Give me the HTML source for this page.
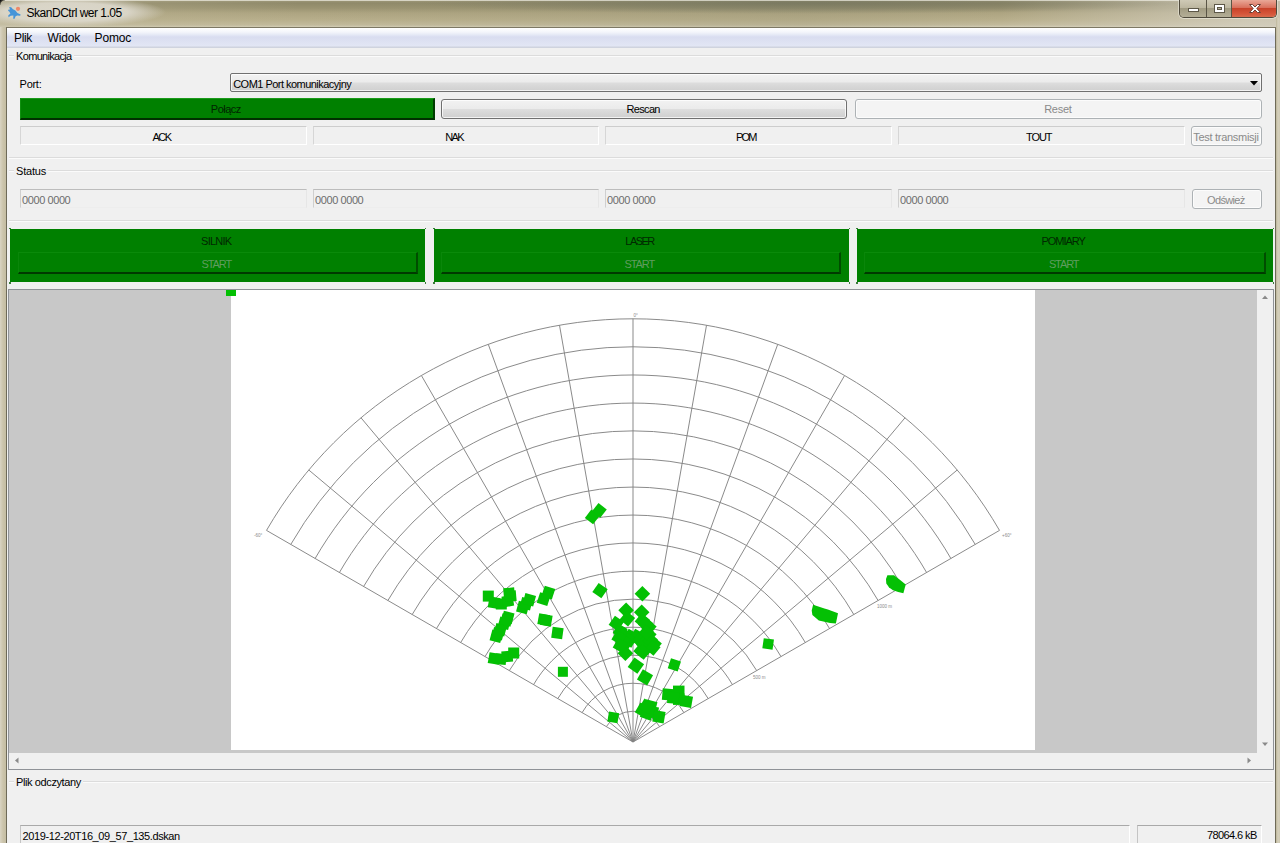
<!DOCTYPE html>
<html lang="pl">
<head>
<meta charset="utf-8">
<title>SkanDCtrl wer 1.05</title>
<style>
html,body{margin:0;padding:0;}
body{width:1280px;height:843px;overflow:hidden;position:relative;background:#c9c2a8;
  font-family:"Liberation Sans",sans-serif;font-size:11px;color:#000;}
.abs,.abs *{position:absolute;box-sizing:border-box;}
div,span{position:absolute;box-sizing:border-box;white-space:nowrap;}
/* window chrome */
#title{left:0;top:0;width:1280px;height:28px;
  background:
   radial-gradient(ellipse 100px 15px at 66px 12px, rgba(219,215,202,1) 0%, rgba(219,215,202,.95) 62%, rgba(219,215,202,0) 100%),
   radial-gradient(ellipse 380px 11px at 800px 3px, rgba(108,110,90,.6) 0%, rgba(108,110,90,.35) 50%, rgba(108,110,90,0) 100%),
   linear-gradient(to right, rgba(200,194,170,.55) 0px, rgba(190,183,152,.2) 160px, rgba(170,162,128,0) 300px, rgba(150,146,116,.22) 800px, rgba(170,162,128,0) 1000px, rgba(214,209,195,.75) 1250px),
   linear-gradient(to bottom, #a19b7c 0px, #8f8969 3px, #9a9371 8px, #ada481 13px, #b8af8c 20px, #c2ba9c 25px, #cfc9b0 26.5px);}
#title .hl{left:0;top:0;width:1280px;height:1px;background:rgba(240,238,228,.7);}
#lframe{left:0;top:27px;width:6px;height:816px;background:linear-gradient(to right,#d9d4c3 0,#cbc4ab 3px,#c4bda3 6px);}
#rframe{left:1276px;top:18px;width:4px;height:825px;background:linear-gradient(to right,#bdb699 0,#d5d0bd 2px,#cfc9b3 4px);}
#client{left:6px;top:27px;width:1270px;height:816px;background:#f0f0f0;border-left:1px solid #6e6a58;border-top:1px solid #7d7864;border-right:1px solid #6e6a58;}
#tl{left:0;top:0;width:5px;height:5px;background:radial-gradient(circle at 5px 5px, rgba(0,0,0,0) 0, rgba(0,0,0,0) 4.2px, #4a473c 5px, #111 6.2px);}
#ttext{left:27px;top:5px;font-size:12px;line-height:15px;color:#000;}
/* window buttons */
#wb{left:1179px;top:0;width:98px;height:18px;border:1px solid #4f4a3c;border-top:none;border-radius:0 0 5px 5px;overflow:hidden;
  box-shadow:0 0 0 1px rgba(240,238,228,.55);}
#wb .b1{left:0;top:0;width:27px;height:17px;background:linear-gradient(to bottom,#cfcab6 0,#bdb7a0 45%,#a19b82 50%,#b4ae96 100%);border-right:1px solid #5a5546;}
#wb .b2{left:27px;top:0;width:25px;height:17px;background:linear-gradient(to bottom,#cfcab6 0,#bdb7a0 45%,#a19b82 50%,#b4ae96 100%);border-right:1px solid #5a5546;}
#wb .b3{left:52px;top:0;width:44px;height:17px;background:linear-gradient(to bottom,#e9a897 0,#d9705c 45%,#c8432a 50%,#d5553a 80%,#d86a4c 100%);}
/* menubar */
#menubar{left:7px;top:28px;width:1268px;height:20px;
  background:linear-gradient(to bottom,#ffffff 0,#f4f6fb 4px,#e4e8f5 7px,#d9ddf0 9px,#dde1f2 13px,#e2e6f4 18px,#cfd3de 19px,#cfd3de 20px);}
#menubar span{top:3px;font-size:12px;line-height:15px;color:#000;}
/* generic widgets */
.gline{height:1px;background:#dcdcdc;box-shadow:0 1px 0 #fbfbfb;}
.gtitle{font-size:11px;line-height:13px;background:#f0f0f0;}
.sunk{border:1px solid;border-color:#cdcdcd #ffffff #ffffff #d6d6d6;background:#f0f0f0;text-align:center;font-size:11px;line-height:16px;}
.btn{border:1px solid #707070;border-radius:3px;text-align:center;font-size:11px;line-height:18px;
  background:linear-gradient(to bottom,#f2f2f2 0,#ebebeb 48%,#dddddd 52%,#cfcfcf 100%);box-shadow:inset 0 0 0 1px rgba(255,255,255,.75);}
.btn.dis{border-color:#adb2b5;background:#f4f4f4;color:#838383;box-shadow:inset 0 0 0 1px #fcfcfc;}
.edit{border:1px solid;border-color:#bdbdbd #e6e6e6 #ededed #cfcfcf;background:#f0f0f0;color:#6d6d6d;font-size:11px;line-height:16px;padding-left:2px;}
.gpanel{background:#008000;}
.gpanel .lab{left:0;width:100%;text-align:center;font-size:11px;line-height:13px;color:#002a00;}
.gpanel .gb{border:1px solid;border-color:#0a8a0a #004d00 #003a00 #0a860a;border-bottom-width:2px;border-right-width:2px;background:#008000;color:#5f9d5f;text-align:center;font-size:11px;line-height:19px;}
.dot{width:1.5px;height:1.5px;background:#3a7a3a;}
</style>
</head>
<body>
<div id="title"><div class="hl"></div></div>
<div id="lframe"></div>
<div id="rframe"></div>
<div id="tl"></div>
<svg style="position:absolute;left:7px;top:5px" width="16" height="16" viewBox="0 0 16 16">
  <path d="M2.2 2.2 C3.5 1.6 5 2.6 5.6 4 L8.4 5.4 L10.4 8 L13.6 9.4 L13.2 10.8 L10.2 10.6 L8.6 11.2 L7.6 13.8 L6.2 13.8 L6.4 10.6 L3.6 10.8 L1.6 12.2 L1.2 10.6 L3.4 8.6 L2.2 6.4 L1 5.8 L1.6 4.4 L3 4.6 Z" fill="#3b8fd9" opacity=".92"/>
  <circle cx="11" cy="3.8" r="2.1" fill="#ef7f5e" opacity=".9"/>
</svg>
<div id="wb">
  <div class="b1"></div><div class="b2"></div><div class="b3"></div>
  <svg style="position:absolute;left:0;top:0" width="96" height="17" viewBox="0 0 96 17">
    <rect x="8.5" y="8.5" width="10" height="3" fill="#fff" stroke="#5d5848" stroke-width="1"/>
    <rect x="34.5" y="4.5" width="10" height="8" fill="#fff" stroke="#5d5848" stroke-width="1"/>
    <rect x="37.5" y="7.5" width="4" height="2" fill="#b7b19a" stroke="#5d5848" stroke-width="1"/>
    <path d="M69.5 4.5 L72.5 4.5 L75 7 L77.5 4.5 L80.5 4.5 L76.8 8.5 L80.5 12.5 L77.5 12.5 L75 10 L72.5 12.5 L69.5 12.5 L73.2 8.5 Z" fill="#fff" stroke="#6b4036" stroke-width="1"/>
  </svg>
</div>
<div id="client"></div>
<div id="menubar"></div>

<!-- Komunikacja group -->
<div class="gline" style="left:9px;top:55px;width:1264px"></div>
<div class="gline" style="left:9px;top:157px;width:1264px"></div>
<div class="gtitle" style="left:14px;top:49px;width:60px;height:13px"></div>
<div class="btn" id="combo" style="left:230px;top:73px;width:1032px;height:19px;text-align:left;padding-left:3px;line-height:17px;border-radius:2px">
  <svg style="position:absolute;right:3px;top:7px" width="8" height="5" viewBox="0 0 8 5"><path d="M0 0 L8 0 L4 4.5 Z" fill="#000"/></svg></div>
<div id="polacz" style="left:20px;top:98px;width:415px;height:22px;background:#008000;border:1px solid;border-color:#1a9a1a #003c00 #003000 #109010;border-bottom-width:2px;border-right-width:2px;text-align:center;font-size:11px;line-height:20px;color:#002400"></div>
<div class="btn" style="left:441px;top:99px;width:406px;height:20px"></div>
<div class="btn dis" style="left:855px;top:99px;width:407px;height:20px"></div>
<div class="sunk" style="left:20px;top:126px;width:287px;height:19px"></div>
<div class="sunk" style="left:313px;top:126px;width:286px;height:19px"></div>
<div class="sunk" style="left:605px;top:126px;width:287px;height:19px"></div>
<div class="sunk" style="left:898px;top:126px;width:287px;height:19px"></div>
<div class="btn dis" style="left:1191px;top:126px;width:71px;height:20px;line-height:18px"></div>

<!-- Status group -->
<div class="gline" style="left:9px;top:170px;width:1264px"></div>
<div class="gline" style="left:9px;top:220px;width:1264px"></div>
<div class="gtitle" style="left:14px;top:164px;width:34px;height:13px"></div>
<div class="edit" style="left:20px;top:189px;width:287px;height:19px"></div>
<div class="edit" style="left:313px;top:189px;width:286px;height:19px"></div>
<div class="edit" style="left:605px;top:189px;width:287px;height:19px"></div>
<div class="edit" style="left:898px;top:189px;width:287px;height:19px"></div>
<div class="btn dis" style="left:1192px;top:189px;width:70px;height:20px;line-height:18px"></div>

<!-- green panels -->
<div class="gpanel" style="left:10px;top:229px;width:415px;height:53px"><div class="gb" style="left:8px;top:23px;width:400px;height:22px"></div></div>
<div class="gpanel" style="left:434px;top:229px;width:415px;height:53px"><div class="gb" style="left:7px;top:23px;width:400px;height:22px"></div></div>
<div class="gpanel" style="left:857px;top:229px;width:416px;height:53px"><div class="gb" style="left:7px;top:23px;width:402px;height:22px"></div></div>

<div class="dot" style="left:9px;top:227.5px"></div>
<div class="dot" style="left:424.5px;top:227.5px"></div>
<div class="dot" style="left:9px;top:282px"></div>
<div class="dot" style="left:424.5px;top:282px"></div>
<div class="dot" style="left:433px;top:227.5px"></div>
<div class="dot" style="left:848.5px;top:227.5px"></div>
<div class="dot" style="left:433px;top:282px"></div>
<div class="dot" style="left:848.5px;top:282px"></div>
<div class="dot" style="left:856px;top:227.5px"></div>
<div class="dot" style="left:1272.5px;top:227.5px"></div>
<div class="dot" style="left:856px;top:282px"></div>
<div class="dot" style="left:1272.5px;top:282px"></div>
<!-- scroll area -->
<div id="scroll" style="left:8px;top:289px;width:1266px;height:481px;border:1px solid #8f9297;background:#f0f0f0"></div>
<div style="left:9px;top:290px;width:1248px;height:463px;background:#c8c8c8"></div>
<div style="left:231px;top:290px;width:804px;height:460px;background:#fff"></div>
<div style="left:226px;top:289.5px;width:10px;height:6px;background:#04c004"></div>
<svg style="position:absolute;left:0;top:0" width="1280" height="843" viewBox="0 0 1280 843">
<g fill="none" stroke="#848484" stroke-width="0.95">
<path d="M606.4 726.6 A30.7 30.7 0 0 1 659.6 726.6"/>
<path d="M582.1 712.6 A58.8 58.8 0 0 1 683.9 712.6"/>
<path d="M557.8 698.6 A86.8 86.8 0 0 1 708.2 698.6"/>
<path d="M533.6 684.6 A114.8 114.8 0 0 1 732.4 684.6"/>
<path d="M509.3 670.6 A142.8 142.8 0 0 1 756.7 670.6"/>
<path d="M485.0 656.6 A170.9 170.9 0 0 1 781.0 656.6"/>
<path d="M460.7 642.5 A198.9 198.9 0 0 1 805.3 642.5"/>
<path d="M436.5 628.5 A226.9 226.9 0 0 1 829.5 628.5"/>
<path d="M412.2 614.5 A255.0 255.0 0 0 1 853.8 614.5"/>
<path d="M387.9 600.5 A283.0 283.0 0 0 1 878.1 600.5"/>
<path d="M363.6 586.5 A311.0 311.0 0 0 1 902.4 586.5"/>
<path d="M339.4 572.5 A339.1 339.1 0 0 1 926.6 572.5"/>
<path d="M315.1 558.5 A367.1 367.1 0 0 1 950.9 558.5"/>
<path d="M290.8 544.4 A395.1 395.1 0 0 1 975.2 544.4"/>
<path d="M266.5 530.4 A423.2 423.2 0 0 1 999.5 530.4"/>
<path d="M633.0 742.0 L266.5 530.4"/>
<path d="M633.0 742.0 L308.8 470.0"/>
<path d="M633.0 742.0 L361.0 417.8"/>
<path d="M633.0 742.0 L421.4 375.5"/>
<path d="M633.0 742.0 L488.3 344.4"/>
<path d="M633.0 742.0 L559.5 325.3"/>
<path d="M633.0 742.0 L633.0 318.8"/>
<path d="M633.0 742.0 L706.5 325.3"/>
<path d="M633.0 742.0 L777.7 344.4"/>
<path d="M633.0 742.0 L844.6 375.5"/>
<path d="M633.0 742.0 L905.0 417.8"/>
<path d="M633.0 742.0 L957.2 470.0"/>
<path d="M633.0 742.0 L999.5 530.4"/>
</g>
<g font-family="Liberation Sans, sans-serif" font-size="4.5" fill="#8c8c8c">
<text x="633.5" y="317">0°</text>
<text x="254" y="537">-60°</text>
<text x="1002" y="537">+60°</text>
<text x="753" y="679">500 m</text>
<text x="877" y="608">1000 m</text>
</g>
<g fill="#04c004">
<rect x="482.8" y="590.6" width="11.0" height="11.0" transform="rotate(0 488.3 596.1)"/>
<rect x="488.6" y="597.2" width="11.0" height="11.0" transform="rotate(10 494.1 602.7)"/>
<rect x="495.8" y="598.5" width="11.0" height="11.0" transform="rotate(0 501.3 604.0)"/>
<rect x="502.3" y="595.6" width="11.0" height="11.0" transform="rotate(-10 507.8 601.1)"/>
<rect x="505.2" y="590.6" width="11.0" height="11.0" transform="rotate(-5 510.7 596.1)"/>
<rect x="503.6" y="587.8" width="11.0" height="11.0" transform="rotate(-5 509.1 593.3)"/>
<rect x="517.3" y="602.1" width="11.0" height="11.0" transform="rotate(15 522.8 607.6)"/>
<rect x="520.6" y="598.2" width="11.0" height="11.0" transform="rotate(15 526.1 603.7)"/>
<rect x="523.8" y="594.3" width="11.0" height="11.0" transform="rotate(15 529.3 599.8)"/>
<rect x="538.2" y="593.6" width="11.0" height="11.0" transform="rotate(18 543.7 599.1)"/>
<rect x="542.8" y="587.1" width="11.0" height="11.0" transform="rotate(18 548.3 592.6)"/>
<rect x="538.2" y="614.1" width="11.0" height="11.0" transform="rotate(10 543.7 619.6)"/>
<rect x="540.8" y="614.8" width="11.0" height="11.0" transform="rotate(10 546.3 620.3)"/>
<rect x="551.9" y="627.5" width="11.0" height="11.0" transform="rotate(8 557.4 633.0)"/>
<rect x="502.3" y="611.9" width="11.0" height="11.0" transform="rotate(15 507.8 617.4)"/>
<rect x="498.7" y="617.8" width="11.0" height="11.0" transform="rotate(15 504.2 623.3)"/>
<rect x="494.8" y="624.3" width="11.0" height="11.0" transform="rotate(15 500.3 629.8)"/>
<rect x="490.8" y="630.8" width="11.0" height="11.0" transform="rotate(15 496.3 636.3)"/>
<rect x="501.0" y="614.5" width="11.0" height="11.0" transform="rotate(15 506.5 620.0)"/>
<rect x="492.5" y="628.2" width="11.0" height="11.0" transform="rotate(15 498.0 633.7)"/>
<rect x="488.6" y="653.0" width="11.0" height="11.0" transform="rotate(10 494.1 658.5)"/>
<rect x="495.2" y="653.6" width="11.0" height="11.0" transform="rotate(5 500.7 659.1)"/>
<rect x="501.7" y="651.0" width="11.0" height="11.0" transform="rotate(-5 507.2 656.5)"/>
<rect x="508.2" y="647.5" width="11.0" height="11.0" transform="rotate(0 513.7 653.0)"/>
<rect x="557.9" y="666.8" width="10" height="10" transform="rotate(0 562.9 671.8)"/>
<rect x="587.0" y="511.7" width="10.5" height="10.5" transform="rotate(38 592.2 516.9)"/>
<rect x="594.1" y="505.1" width="10.5" height="10.5" transform="rotate(38 599.4 510.4)"/>
<rect x="594.5" y="585.2" width="11.0" height="11.0" transform="rotate(35 600.0 590.7)"/>
<rect x="636.9" y="588.2" width="11.0" height="11.0" transform="rotate(45 642.4 593.7)"/>
<rect x="620.6" y="604.7" width="11.0" height="11.0" transform="rotate(45 626.1 610.2)"/>
<rect x="636.2" y="606.7" width="11.0" height="11.0" transform="rotate(45 641.7 612.2)"/>
<rect x="621.9" y="613.2" width="11.0" height="11.0" transform="rotate(40 627.4 618.7)"/>
<rect x="610.8" y="617.8" width="11.0" height="11.0" transform="rotate(35 616.3 623.3)"/>
<rect x="636.9" y="615.2" width="11.0" height="11.0" transform="rotate(40 642.4 620.7)"/>
<rect x="643.4" y="621.7" width="11.0" height="11.0" transform="rotate(40 648.9 627.2)"/>
<rect x="614.7" y="625.6" width="11.0" height="11.0" transform="rotate(30 620.2 631.1)"/>
<rect x="617.3" y="632.1" width="11.0" height="11.0" transform="rotate(30 622.8 637.6)"/>
<rect x="625.2" y="630.8" width="11.0" height="11.0" transform="rotate(30 630.7 636.3)"/>
<rect x="631.7" y="630.8" width="11.0" height="11.0" transform="rotate(30 637.2 636.3)"/>
<rect x="643.4" y="629.5" width="11.0" height="11.0" transform="rotate(40 648.9 635.0)"/>
<rect x="618.6" y="639.9" width="11.0" height="11.0" transform="rotate(30 624.1 645.4)"/>
<rect x="648.6" y="638.6" width="11.0" height="11.0" transform="rotate(40 654.1 644.1)"/>
<rect x="640.8" y="642.5" width="11.0" height="11.0" transform="rotate(40 646.3 648.0)"/>
<rect x="635.6" y="645.1" width="11.0" height="11.0" transform="rotate(40 641.1 650.6)"/>
<rect x="619.9" y="647.8" width="11.0" height="11.0" transform="rotate(45 625.4 653.3)"/>
<rect x="640.1" y="618.4" width="11.0" height="11.0" transform="rotate(40 645.6 623.9)"/>
<rect x="618.6" y="629.5" width="11.0" height="11.0" transform="rotate(30 624.1 635.0)"/>
<rect x="623.8" y="634.7" width="11.0" height="11.0" transform="rotate(30 629.3 640.2)"/>
<rect x="618.6" y="636.0" width="11.0" height="11.0" transform="rotate(30 624.1 641.5)"/>
<rect x="634.3" y="634.7" width="11.0" height="11.0" transform="rotate(35 639.8 640.2)"/>
<rect x="638.2" y="638.6" width="11.0" height="11.0" transform="rotate(40 643.7 644.1)"/>
<rect x="644.7" y="634.7" width="11.0" height="11.0" transform="rotate(40 650.2 640.2)"/>
<rect x="647.3" y="642.5" width="11.0" height="11.0" transform="rotate(40 652.8 648.0)"/>
<rect x="637.5" y="646.5" width="11.0" height="11.0" transform="rotate(40 643.0 652.0)"/>
<rect x="613.4" y="632.1" width="11.0" height="11.0" transform="rotate(30 618.9 637.6)"/>
<rect x="614.7" y="639.9" width="11.0" height="11.0" transform="rotate(30 620.2 645.4)"/>
<rect x="640.8" y="626.9" width="11.0" height="11.0" transform="rotate(40 646.3 632.4)"/>
<rect x="630.0" y="659.7" width="11.8" height="11.8" transform="rotate(35 635.9 665.6)"/>
<rect x="639.1" y="671.5" width="11.8" height="11.8" transform="rotate(30 645.0 677.4)"/>
<rect x="669.1" y="659.7" width="10.5" height="10.5" transform="rotate(18 674.3 665.0)"/>
<rect x="608.1" y="712.2" width="10.3" height="10.3" transform="rotate(10 613.3 717.4)"/>
<rect x="636.9" y="704.5" width="11.5" height="11.5" transform="rotate(30 642.6 710.2)"/>
<rect x="644.7" y="700.6" width="11.5" height="11.5" transform="rotate(15 650.4 706.3)"/>
<rect x="646.6" y="706.4" width="11.5" height="11.5" transform="rotate(10 652.4 712.2)"/>
<rect x="653.2" y="711.0" width="11.5" height="11.5" transform="rotate(10 658.9 716.7)"/>
<rect x="641.4" y="707.7" width="11.5" height="11.5" transform="rotate(20 647.2 713.5)"/>
<rect x="640.8" y="700.6" width="11.5" height="11.5" transform="rotate(30 646.5 706.3)"/>
<rect x="662.3" y="688.8" width="11.5" height="11.5" transform="rotate(5 668.0 694.6)"/>
<rect x="673.0" y="685.6" width="11.5" height="11.5" transform="rotate(0 678.7 691.3)"/>
<rect x="673.0" y="693.4" width="11.5" height="11.5" transform="rotate(0 678.7 699.1)"/>
<rect x="680.6" y="695.7" width="11.5" height="11.5" transform="rotate(10 686.3 701.5)"/>
<rect x="667.5" y="692.1" width="11.5" height="11.5" transform="rotate(5 673.3 697.8)"/>
<rect x="763.0" y="638.8" width="10.3" height="10.3" transform="rotate(8 768.1 644.0)"/>
<polygon points="813.1,604.7 824.4,608.5 827.9,609.5 838.0,613.2 835.9,623.6 830.0,622.9 818.8,620.5 812.4,615.1 811.7,610.6"/>
<polygon points="887.4,575.2 894.0,575.2 898.9,579.0 905.7,584.6 903.4,593.3 898.2,592.1 893.0,590.2 889.1,587.4 886.3,583.6 886.0,579.0"/>
</g>
</svg>
<svg style="position:absolute;left:1257px;top:290px" width="16" height="479" viewBox="0 0 16 479">
  <path d="M5 9 L8 5.5 L11 9 Z" fill="#8a8a8a"/>
  <path d="M5 452.5 L11 452.5 L8 456 Z" fill="#8a8a8a"/>
</svg>
<svg style="position:absolute;left:9px;top:753px" width="1248" height="16" viewBox="0 0 1248 16">
  <path d="M9.5 4.5 L6 7.5 L9.5 10.5 Z" fill="#8a8a8a"/>
  <path d="M1238.5 4.5 L1242 7.5 L1238.5 10.5 Z" fill="#8a8a8a"/>
</svg>

<!-- Plik odczytany group -->
<div class="gline" style="left:9px;top:781px;width:1264px"></div>
<div class="gtitle" style="left:14px;top:775px;width:69px;height:13px"></div>
<div class="sunk" style="left:20px;top:825px;width:1110px;height:19px;text-align:left;padding-left:2px;border-color:#a9a9a9 #fff #fff #c4c4c4;line-height:18px"></div>
<div class="sunk" style="left:1137px;top:825px;width:125px;height:19px;text-align:right;padding-right:4px;border-color:#a9a9a9 #fff #fff #c4c4c4;line-height:18px"></div>
<span class="t" style="left:26.60px;top:6.00px;font-size:12px;line-height:15px;letter-spacing:-0.496px;color:#000">SkanDCtrl wer 1.05</span>
<span class="t" style="left:14.10px;top:31.00px;font-size:12px;line-height:15px;letter-spacing:-0.412px;color:#000">Plik</span>
<span class="t" style="left:47.60px;top:31.00px;font-size:12px;line-height:15px;letter-spacing:-0.185px;color:#000">Widok</span>
<span class="t" style="left:94.60px;top:31.00px;font-size:12px;line-height:15px;letter-spacing:-0.187px;color:#000">Pomoc</span>
<span class="t" style="left:16.10px;top:49.30px;font-size:11px;line-height:14px;letter-spacing:-0.687px;color:#000">Komunikacja</span>
<span class="t" style="left:19.60px;top:76.90px;font-size:11px;line-height:14px;letter-spacing:-0.282px;color:#000">Port:</span>
<span class="t" style="left:233.20px;top:77.00px;font-size:11px;line-height:14px;letter-spacing:-0.527px;color:#000">COM1 Port komunikacyjny</span>
<span class="t" style="left:210.85px;top:102.30px;font-size:11px;line-height:14px;letter-spacing:-0.533px;color:#002400">Połącz</span>
<span class="t" style="left:626.50px;top:102.20px;font-size:11px;line-height:14px;letter-spacing:-0.669px;color:#000">Rescan</span>
<span class="t" style="left:1044.20px;top:102.20px;font-size:11px;line-height:14px;letter-spacing:-0.284px;color:#8a8a8a">Reset</span>
<span class="t" style="left:152.50px;top:129.90px;font-size:11px;line-height:14px;letter-spacing:-1.509px;color:#000">ACK</span>
<span class="t" style="left:445.20px;top:129.90px;font-size:11px;line-height:14px;letter-spacing:-1.609px;color:#000">NAK</span>
<span class="t" style="left:736.10px;top:129.90px;font-size:11px;line-height:14px;letter-spacing:-1.853px;color:#000">POM</span>
<span class="t" style="left:1026.10px;top:129.90px;font-size:11px;line-height:14px;letter-spacing:-1.130px;color:#000">TOUT</span>
<span class="t" style="left:1193.20px;top:130.20px;font-size:11px;line-height:14px;letter-spacing:-0.284px;color:#8a8a8a">Test transmisji</span>
<span class="t" style="left:16.10px;top:164.30px;font-size:11px;line-height:14px;letter-spacing:-0.217px;color:#000">Status</span>
<span class="t" style="left:22.10px;top:193.00px;font-size:11px;line-height:14px;letter-spacing:-0.424px;color:#6d6d6d">0000 0000</span>
<span class="t" style="left:315.10px;top:193.00px;font-size:11px;line-height:14px;letter-spacing:-0.424px;color:#6d6d6d">0000 0000</span>
<span class="t" style="left:607.10px;top:193.00px;font-size:11px;line-height:14px;letter-spacing:-0.424px;color:#6d6d6d">0000 0000</span>
<span class="t" style="left:900.10px;top:193.00px;font-size:11px;line-height:14px;letter-spacing:-0.424px;color:#6d6d6d">0000 0000</span>
<span class="t" style="left:1207.10px;top:192.70px;font-size:11px;line-height:14px;letter-spacing:-0.663px;color:#8a8a8a">Odśwież</span>
<span class="t" style="left:201.10px;top:233.70px;font-size:11px;line-height:14px;letter-spacing:-0.750px;color:#002800">SILNIK</span>
<span class="t" style="left:201.60px;top:256.60px;font-size:11px;line-height:14px;letter-spacing:-1.111px;color:#5f9d5f">START</span>
<span class="t" style="left:625.35px;top:233.70px;font-size:11px;line-height:14px;letter-spacing:-1.556px;color:#002800">LASER</span>
<span class="t" style="left:624.60px;top:256.60px;font-size:11px;line-height:14px;letter-spacing:-1.111px;color:#5f9d5f">START</span>
<span class="t" style="left:1041.40px;top:233.70px;font-size:11px;line-height:14px;letter-spacing:-1.005px;color:#002800">POMIARY</span>
<span class="t" style="left:1048.90px;top:256.60px;font-size:11px;line-height:14px;letter-spacing:-1.111px;color:#5f9d5f">START</span>
<span class="t" style="left:16.10px;top:775.30px;font-size:11px;line-height:14px;letter-spacing:-0.400px;color:#000">Plik odczytany</span>
<span class="t" style="left:22.60px;top:828.50px;font-size:11px;line-height:14px;letter-spacing:-0.400px;color:#000">2019-12-20T16_09_57_135.dskan</span>
<span class="t" style="left:1207.00px;top:828.40px;font-size:11px;line-height:14px;letter-spacing:-0.595px;color:#000">78064.6 kB</span>
</body>
</html>
